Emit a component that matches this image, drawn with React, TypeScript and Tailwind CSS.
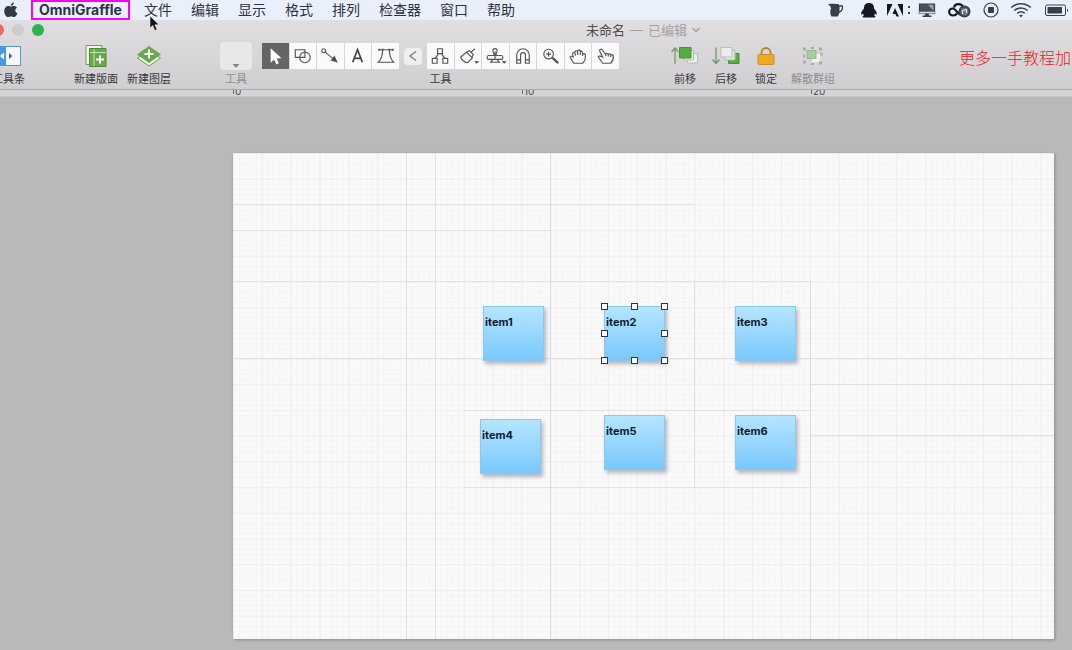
import React, { useState } from "react";

const menus = ["文件", "编辑", "显示", "格式", "排列", "检查器", "窗口", "帮助"];

const nodes = [
  { id: "item1", x: 250, y: 153 },
  { id: "item2", x: 371, y: 153 },
  { id: "item3", x: 502, y: 153 },
  { id: "item4", x: 247, y: 266 },
  { id: "item5", x: 371, y: 262 },
  { id: "item6", x: 502, y: 262 },
];

const handles = ["nw", "n", "ne", "w", "", "e", "sw", "s", "se"];

const line = { fill: "none", stroke: "#55555a", strokeWidth: 1.2 } as const;

const drawTools = [
  {
    name: "选择",
    icon: <path d="M9 5v15l3.6-3.3 2.3 5 2.6-1.2-2.3-4.8 5-.3z" fill="#fff" />,
  },
  {
    name: "形状",
    icon: (
      <g {...line}>
        <path d="M5.500 6.500h10v8h-10z" />
        <circle cx="15.500" cy="14.500" r="5.500" />
      </g>
    ),
  },
  {
    name: "连线",
    icon: (
      <g {...line}>
        <circle cx="7" cy="7.500" r="2" />
        <path d="M8.500 9l9 7.500" />
        <path d="M20.500 19l-5.500-1.600 3-3.800z" fill="#444" />
      </g>
    ),
  },
  {
    name: "文本",
    icon: <path d="M8 19.500l5-13 5 13M9.800 15.500h6.500" fill="none" stroke="#444449" strokeWidth="1.800" />,
  },
  {
    name: "钢笔",
    icon: (
      <g {...line}>
        <path d="M6 6.500h15M5.500 19.500h16c-3-3-4.500-7.500-4.500-13h-7c0 5.500-1.500 10-4.500 13z" />
        <path d="M5.500 5.500h2v2h-2zM9 5.500h2v2H9zM16 5.500h2v2h-2zM19.500 5.500h2v2h-2z" fill="#55555a" stroke="none" />
      </g>
    ),
  },
];

const moreTools = [
  {
    name: "图表",
    icon: (
      <g {...line}>
        <path d="M11 5.500h5v5h-5zM5.500 15.500h5v5h-5zM16.500 15.500h5v5h-5zM12 10.500l-3.500 5M15 10.500l3.500 5" />
      </g>
    ),
  },
  {
    name: "样式刷",
    icon: (
      <g {...line}>
        <path d="M6 14l6-5 6 6-5 5c-3-.5-6-3-7-6zM12.500 8.500l2.500-1 4 4-1.500 3M16.500 9.500l4-4" />
        <path d="M20 18.500h5l-2.500 2.500z" fill="#444" stroke="none" />
      </g>
    ),
  },
  {
    name: "图章",
    icon: (
      <g {...line}>
        <path d="M12 12.500c1-1.500 0-3-.5-4a2.200 2.200 0 1 1 4 0c-.5 1-1.500 2.500-.5 4M6.500 12.500h14c1.500 0 1.500 4 0 4h-14c-1.500 0-1.500-4 0-4zM11.500 16.500l-2.500 3h9l-2.500-3M13.500 8v9" />
        <path d="M20.500 18.500h5l-2.500 2.500z" fill="#444" stroke="none" />
      </g>
    ),
  },
  {
    name: "磁铁",
    icon: (
      <g {...line}>
        <path d="M7 20.500V12a6.500 6.500 0 0 1 13 0v8.500h-4V12a2.500 2.500 0 0 0-5 0v8.500zM7 17h4M16 17h4" />
      </g>
    ),
  },
  {
    name: "缩放",
    icon: (
      <g {...line}>
        <circle cx="11" cy="11" r="5" />
        <path d="M8.500 11h5M11 8.500v5" />
        <path d="M15 15l6 5.500" strokeWidth="2.400" />
      </g>
    ),
  },
  {
    name: "抓手",
    icon: (
      <g {...line}>
        <path d="M9 20.500h9.500c2.500-3 3-6.500 2.500-9-.5-1.200-2-1.200-2.500 0-.3-3-1-4-2.500-3.500-.5-1.500-2.500-1.500-3 0-1.500-1-2.800-.3-2.800 1.200-1.500-.5-2.500.6-2.200 2.300l.5 2.500c-2-1.500-3.500-.5-3 .5zM10.200 9.200l.8 3.300M13 8l.3 4M16 8l-.2 4M18.500 10.500l-.5 2.500" />
      </g>
    ),
  },
  {
    name: "浏览",
    icon: (
      <g {...line}>
        <path d="M10 20.500h8.500c2.500-3 3-5.500 2.500-8-.5-1.200-2-1.200-2.500-.5-.3-1.500-2-1.700-2.700-.5-.5-1.500-2.200-1.500-2.800-.3L9.500 6.500c-1.500-1.500-3.200 0-2.500 1.500l3 6c-3-1.500-5-1-4.500 0zM13 11.200l.5 2M15.800 11.500l.2 2M18.500 12l-.2 2" />
      </g>
    ),
  },
];

function ToolButton({ name, active, onClick, children }: {
  name: string;
  active: boolean;
  onClick: () => void;
  children: React.ReactNode;
}) {
  return (
    <button aria-label={name} aria-pressed={active} onClick={onClick}
      className={`flex h-[26px] flex-1 items-center justify-center ${active ? "bg-[#656567]" : "bg-[#fafafb]"}`}>
      <svg width="26" height="26" viewBox="0 0 27 26">{children}</svg>
    </button>
  );
}

function ToolbarItem({ label, muted, className, children }: {
  label: string;
  muted?: boolean;
  className: string;
  children: React.ReactNode;
}) {
  return (
    <button disabled={muted} className={`flex shrink-0 flex-col items-center ${className}`}>
      <span className="flex h-7 items-center">{children}</span>
      <span className={`mt-px whitespace-nowrap leading-4 ${muted ? "text-[#8f8d91]" : "text-[#39383d]"}`}>{label}</span>
    </button>
  );
}

function StatusIcons() {
  return (
    <div className="flex shrink-0 items-center pr-[3px] text-[#3a3e4b]">
      {/* pitcher */}
      <svg className="mr-4" width="16" height="16" viewBox="0 0 16 16">
        <path d="M.5 2C3 1.500 8 1.500 11 2.200v1.300c1.500-1 4.200-1 4.200 1.500 0 3-1.500 5-4 6-.2 1.600-.8 2.800-1.700 3.500h-6C2.200 13 1.800 9.500 3 6.500 3 5 2 3.500.5 3zM11.500 5v4.200c1.500-.8 2.300-2.200 2.300-3.700 0-1.400-1.500-1.300-2.300-.5z" fill="currentColor" fillRule="evenodd" />
      </svg>
      {/* penguin */}
      <svg className="mr-2" width="18" height="16" viewBox="0 0 18 16">
        <path d="M9 1c3.500 0 5 2.200 5 5 0 1 1 1.600 1.800 2.700 1 1.600 1.400 3.300.7 3.800-.5.200-1-.5-1.500-1-.1.800-.5 1.500-1 2 2 .5 1.700 2 .2 2H3.800c-1.500 0-1.800-1.500.2-2-.5-.5-.9-1.200-1-2-.5.500-1 1.200-1.500 1-.7-.5-.3-2.200.7-3.800C3 7.600 4 7 4 6c0-2.800 1.500-5 5-5z" fill="#151824" />
      </svg>
      <svg className="mr-1.5" width="26" height="16" viewBox="0 0 26 16">
        <path d="M1 2h5.500L1 14zM11.500 2H17v12zM9 6l4 8.500h-2.500L9.400 12H6.500z" fill="#151824" />
        <path d="M22 4h2v2h-2zM22 10h2v2h-2z" fill="currentColor" />
      </svg>
      {/* display */}
      <svg className="mr-3" width="18" height="16" viewBox="0 0 18 16">
        <path d="M1.500 2h15v7h-15z" fill="#4b4f5b" stroke="currentColor" strokeWidth="1.200" />
        <path d="M10 2.800l5.500 6V2.800z" fill="#9ba0ac" />
        <path d="M1 9.600h16v2H1z" fill="#dfe5f1" stroke="currentColor" strokeWidth=".6" />
        <path d="M7.500 11.500h3l.8 2.500H6.700zM4.500 13.500h9V15h-9z" fill="currentColor" />
      </svg>
      {/* cloud */}
      <svg className="mr-3" width="23" height="16" viewBox="0 0 23 16">
        <path d="M9 11.500c-1 1.300-2.200 2-3.800 2C2.800 13.500 1.200 12 1.200 10s1.600-3.500 3.800-3.500C7.500 6.500 9.500 12 14 13.500M6 5.500C6.500 3.500 8.200 2.200 10.500 2.200c2.400 0 4 1.300 4.700 3" fill="none" stroke="#151824" strokeWidth="2.200" />
        <circle cx="16.500" cy="9.500" r="5" fill="#6f7480" stroke="currentColor" strokeWidth="2" />
        <path d="M14.500 12V8.500l4-1V11" fill="none" stroke="#e9effb" />
      </svg>
      <svg className="mr-[11px]" width="16" height="16" viewBox="0 0 16 16">
        <circle cx="8" cy="8" r="7" fill="none" stroke="currentColor" strokeWidth="1.200" />
        <rect x="5" y="5" width="6" height="6" rx="1" fill="currentColor" />
      </svg>
      {/* wifi */}
      <svg className="mr-3" width="22" height="16" viewBox="0 0 22 16" fill="none" stroke="currentColor" strokeWidth="1.500">
        <path d="M1.200 5.500c5.500-5 14-5 19.600 0M4.300 8.500c4-3.500 9.400-3.500 13.400 0M7.300 11.300c2.300-1.900 5.100-1.900 7.400 0" />
        <path d="M11 15.500l-2-2.200c1.200-.9 2.800-.9 4 0z" fill="currentColor" stroke="none" />
      </svg>
      <svg width="25" height="16" viewBox="0 0 25 16">
        <rect x="1.500" y="3" width="20" height="10.500" rx="1.500" fill="none" stroke="currentColor" />
        <rect x="3.500" y="5" width="14.500" height="6.500" fill="currentColor" />
        <path d="M23 6.500c1.400.4 1.400 3.100 0 3.500z" fill="currentColor" />
      </svg>
    </div>
  );
}

function Grid() {
  return (
    <svg className="block h-full w-full" aria-hidden="true">
      <defs>
        <pattern id="minor" width="5.768" height="5.140" patternUnits="userSpaceOnUse">
          <path d="M.5 0v6M0 .5h6" stroke="#f5f5f6" strokeWidth="1" />
        </pattern>
        <pattern id="major" width="28.840" height="25.700" patternUnits="userSpaceOnUse">
          <path d="M.5 0v26M0 .5h29" stroke="#eeeef0" strokeWidth="1" />
        </pattern>
      </defs>
      <rect width="100%" height="100%" fill="#fafafb" />
      <rect width="100%" height="100%" fill="url(#minor)" />
      <rect width="100%" height="100%" fill="url(#major)" />
      <path d="M173.500 0v486M202.500 0v486M317.500 0v486M461.500 128v206M577.500 128v358M0 51.500h461M0 77.500h317M0 128.500h577M0 205.500h821M577 231.500h244M231 257.500h346M577 282.500h244M231 334.500h346" stroke="#e2e2e5" fill="none" />
      <path d="M317.500 0v486M577.500 128v206" stroke="#dadbdd" />
    </svg>
  );
}

export default function App() {
  const [tool, setTool] = useState("选择");
  const [selected, setSelected] = useState("item2");

  return (
    <div className="relative flex h-screen flex-col overflow-hidden bg-[#b9b9b9] font-['Inter','Noto_Sans_CJK_SC',sans-serif]">
      <header className="flex h-5 shrink-0 items-center justify-between bg-[#e9effb] text-[14px] leading-5 text-[#2e3241]">
        <nav className="flex items-center">
          <button aria-label="Apple" className="ml-[3px] mr-3">
            <svg width="16" height="16" viewBox="0 0 16 16" fill="#343946">
              <path d="M10.800.500c.1 1.600-1.200 3.200-2.900 3.200C7.700 2.200 9.200.700 10.800.500zM8 4.600c.8 0 1.600-.7 3-.7 1.200 0 2.400.6 3 1.500-2.500 1.500-2.100 4.800.5 5.800-.6 1.600-2 3.900-3.400 3.900-1.200 0-1.500-.7-3-.7s-1.900.7-3 .7C3.200 15.100 1.200 11.900 1.200 8.900c0-3 1.900-5 4-5 1.300 0 2.100.7 2.800.7z" />
            </svg>
          </button>
          <button className="mr-[14px] h-5 border-2 border-[#ff00f0] px-1.5 text-[14px] font-bold leading-4">OmniGraffle</button>
          <div className="flex gap-[19px]">
            {menus.map((m) => (
              <button key={m}>{m}</button>
            ))}
          </div>
        </nav>
        <StatusIcons />
      </header>

      <section className="shrink-0 border-b border-[#aaa9ab] bg-linear-to-b from-[#e1dee1] to-[#d0ced1]">
        <div className="flex h-5 items-center text-[13px] leading-5">
          <div className="-ml-2 flex gap-2">
            <button aria-label="关闭" className="h-3 w-3 rounded-full bg-[#f26560]" />
            <button aria-label="最小化" className="h-3 w-3 rounded-full bg-[#cfcccf]" />
            <button aria-label="全屏" className="h-3 w-3 rounded-full bg-[#2db24d]" />
          </div>
          <h1 className="ml-[542px] flex items-center gap-[5px] whitespace-nowrap text-[#4d4b50]">
            未命名
            <span className="text-[#a4a1a6]">—</span>
            <span className="text-[#a4a1a6]">已编辑</span>
            <svg width="8" height="6" viewBox="0 0 8 6" fill="none" stroke="#a4a1a6" strokeWidth="1.400">
              <path d="M.5 1L4 4.500 7.500 1" />
            </svg>
          </h1>
        </div>

        <div className="flex h-[49px] items-start pt-[2px] text-[11px]">
          <ToolbarItem label="工具条" className="-ml-2 w-[33px]">
            <svg width="24" height="20" viewBox="0 0 24 20">
              <rect x=".5" y=".5" width="23" height="19" fill="#f4f8fc" stroke="#5796cf" />
              <path d="M1 1h8v18H1z" fill="#469be2" />
              <path d="M7 6.500v7L3 10z" fill="#fff" />
              <path d="M12 7v6l3-3z" fill="#2c5c8b" />
            </svg>
          </ToolbarItem>
          <ToolbarItem label="新建版面" className="ml-[49px] w-11">
            <svg width="22" height="24" viewBox="0 0 22 24">
              <path d="M1 1.500h16v19H1z" fill="#f0f4ec" stroke="#67a04e" />
              <path d="M4.500 4.500h16.500v18H4.500z" fill="#69a94a" stroke="#4f8c36" />
              <path d="M5 8.500h16M9 5v17" stroke="#c5e0b7" />
              <path d="M15 11.500v8M11 15.500h8" stroke="#fff" strokeWidth="2" />
            </svg>
          </ToolbarItem>
          <ToolbarItem label="新建图层" className="ml-[9px] w-11">
            <svg width="26" height="22" viewBox="0 0 26 22">
              <path d="M1.500 13L13 21l11.500-8-4-2.500h-15z" fill="#f0f4ec" stroke="#67a04e" />
              <path d="M13 1l12 8.500L13 18 1 9.500z" fill="#69a94a" />
              <path d="M13 4.500v9M8.500 9h9" stroke="#fff" strokeWidth="2" />
            </svg>
          </ToolbarItem>

          <div className="ml-[49px] flex w-8 shrink-0 flex-col items-center">
            <div className="relative h-7 w-8">
              <select id="tool-set" className="h-7 w-8 appearance-none rounded-sm bg-[#e9e8e9]" />
              <svg className="pointer-events-none absolute bottom-0.5 left-3" width="8" height="4" viewBox="0 0 8 4">
                <path d="M.5 0h7L4 4z" fill="#85848a" />
              </svg>
            </div>
            <label htmlFor="tool-set" className="mt-px leading-4 text-[#8f8d91]">工具</label>
          </div>

          <div className="ml-[10px] flex w-[357px] shrink-0 flex-col items-center">
            <div className="flex h-7 w-full items-center">
              <div className="flex w-[137px] gap-px">
                {drawTools.map((t) => (
                  <ToolButton key={t.name} name={t.name} active={tool === t.name} onClick={() => setTool(t.name)}>{t.icon}</ToolButton>
                ))}
              </div>
              <button aria-label="收起" className="mx-[5px] flex h-[17px] w-[18px] items-center justify-center rounded-sm bg-[#f0eff0]">
                <svg width="8" height="10" viewBox="0 0 8 10" fill="none" stroke="#77757a" strokeWidth="1.200">
                  <path d="M7 .5L1 5l6 4.500" />
                </svg>
              </button>
              <div className="flex flex-1 gap-px">
                {moreTools.map((t) => (
                  <ToolButton key={t.name} name={t.name} active={tool === t.name} onClick={() => setTool(t.name)}>{t.icon}</ToolButton>
                ))}
              </div>
            </div>
            <span className="mt-px leading-4 text-[#39383d]">工具</span>
          </div>

          <ToolbarItem label="前移" className="ml-[53px] w-[26px]">
            <svg width="28" height="20" viewBox="0 0 28 20">
              <path d="M4 18V2.500M.5 6L4 2l3.500 4" fill="none" stroke="#6d9b62" strokeWidth="1.300" />
              <path d="M16.500 7.500h10v9.500h-10z" fill="#eeedef" stroke="#bcbabd" />
              <path d="M12.500 4.500h10v9.500h-10z" fill="#e9efe5" stroke="#a9c3a0" />
              <path d="M8.500 1.500h11.500v10.500H8.500z" fill="#57ab43" stroke="#469236" />
            </svg>
          </ToolbarItem>
          <ToolbarItem label="后移" className="ml-[14px] w-7">
            <svg width="28" height="20" viewBox="0 0 28 20">
              <path d="M4 1.500V17M.5 13.500L4 17.500l3.500-4" fill="none" stroke="#6d9b62" strokeWidth="1.300" />
              <path d="M16.500 7.500h10.500v10H16.500z" fill="#57ab43" stroke="#469236" />
              <path d="M12.500 4.500H23v9.500H12.500z" fill="#dce8d6" stroke="#a9c3a0" />
              <path d="M9 1.500h11V11H9z" fill="#eeedef" stroke="#bcbabd" />
            </svg>
          </ToolbarItem>
          <ToolbarItem label="锁定" className="ml-[14px] w-6">
            <svg width="18" height="18" viewBox="0 0 18 18">
              <path d="M4.500 9V5.500a4.500 4.500 0 0 1 9 0V9" fill="none" stroke="#b68431" strokeWidth="1.800" />
              <rect x="1" y="7.500" width="16" height="10" rx="1" fill="#efa925" stroke="#cd8d20" />
            </svg>
          </ToolbarItem>
          <ToolbarItem label="解散群组" muted className="ml-[13px] w-11">
            <svg width="22" height="20" viewBox="0 0 22 20">
              <path d="M10 8h8v8h-8z" fill="#f1f0f1" />
              <path d="M5 4.500h9v8H5z" fill="#a5ce9b" stroke="#90bd86" />
              <path d="M1 1.500h3v3H1zM9 1h3v2H9zM17 1.500h3v3h-3zM18.500 6.500h2v3h-2zM1 14.500h3v3H1zM9 17h3v2H9zM17 15.500h3v3h-3zM1 8.500h2v3H1z" fill="#a9aba6" />
            </svg>
          </ToolbarItem>
          <p className="ml-[124px] mt-1 whitespace-nowrap text-[16px] font-light leading-6 text-[#e8201c]">更多一手教程加</p>
        </div>
      </section>

      {/* ruler, its numbers are half hidden by the toolbar */}
      <div className="flex h-[7px] shrink-0 items-end overflow-hidden border-b border-[#c6c6c6] bg-[#d6d5d6] pl-[233px] text-[10px] leading-[10px] text-[#4d4d50]">
        {[0, 10, 20].map((n) => (
          <span key={n} className="flex w-[289px] shrink-0 gap-px">
            <span className="h-2 w-px bg-[#6a6a6d]" />
            {n}
          </span>
        ))}
      </div>

      <main className="flex flex-1 pb-[11px] pl-[233px] pr-[18px] pt-14">
        <div className="relative flex-1 shadow-[1px_1px_3px_#8a8a8a]">
          <div className="absolute inset-0">
            <Grid />
          </div>
          {nodes.map((n) => (
            <button key={n.id} onClick={() => setSelected(n.id)} style={{ left: n.x, top: n.y }}
              className="absolute h-[55px] w-[61px] border border-[#8cc8ee] bg-linear-to-b from-[#b5e5ff] to-[#79c8fb] shadow-[2px_3px_4px_#b5b5ba]">
              <span className="block h-full pl-px pt-[7px] text-left text-[11px] font-bold leading-4 text-[#0d1c30]">{n.id}</span>
              {selected === n.id && (
                <span className="absolute -inset-1 grid grid-cols-[auto_auto_auto] content-between justify-between">
                  {handles.map((h) => (
                    <span key={h} className={`h-[7px] w-[7px] ${h ? "border border-[#34343c] bg-white" : ""}`} />
                  ))}
                </span>
              )}
            </button>
          ))}
        </div>
      </main>

      {/* pointer */}
      <svg className="pointer-events-none absolute left-[149px] top-[15px]" width="11" height="17" viewBox="0 0 11 17">
        <path d="M1 1v12l2.800-2.500 2 5 2.200-1-2-4.700H10z" fill="#111" stroke="#e8e8ec" strokeWidth=".6" />
      </svg>
    </div>
  );
}
